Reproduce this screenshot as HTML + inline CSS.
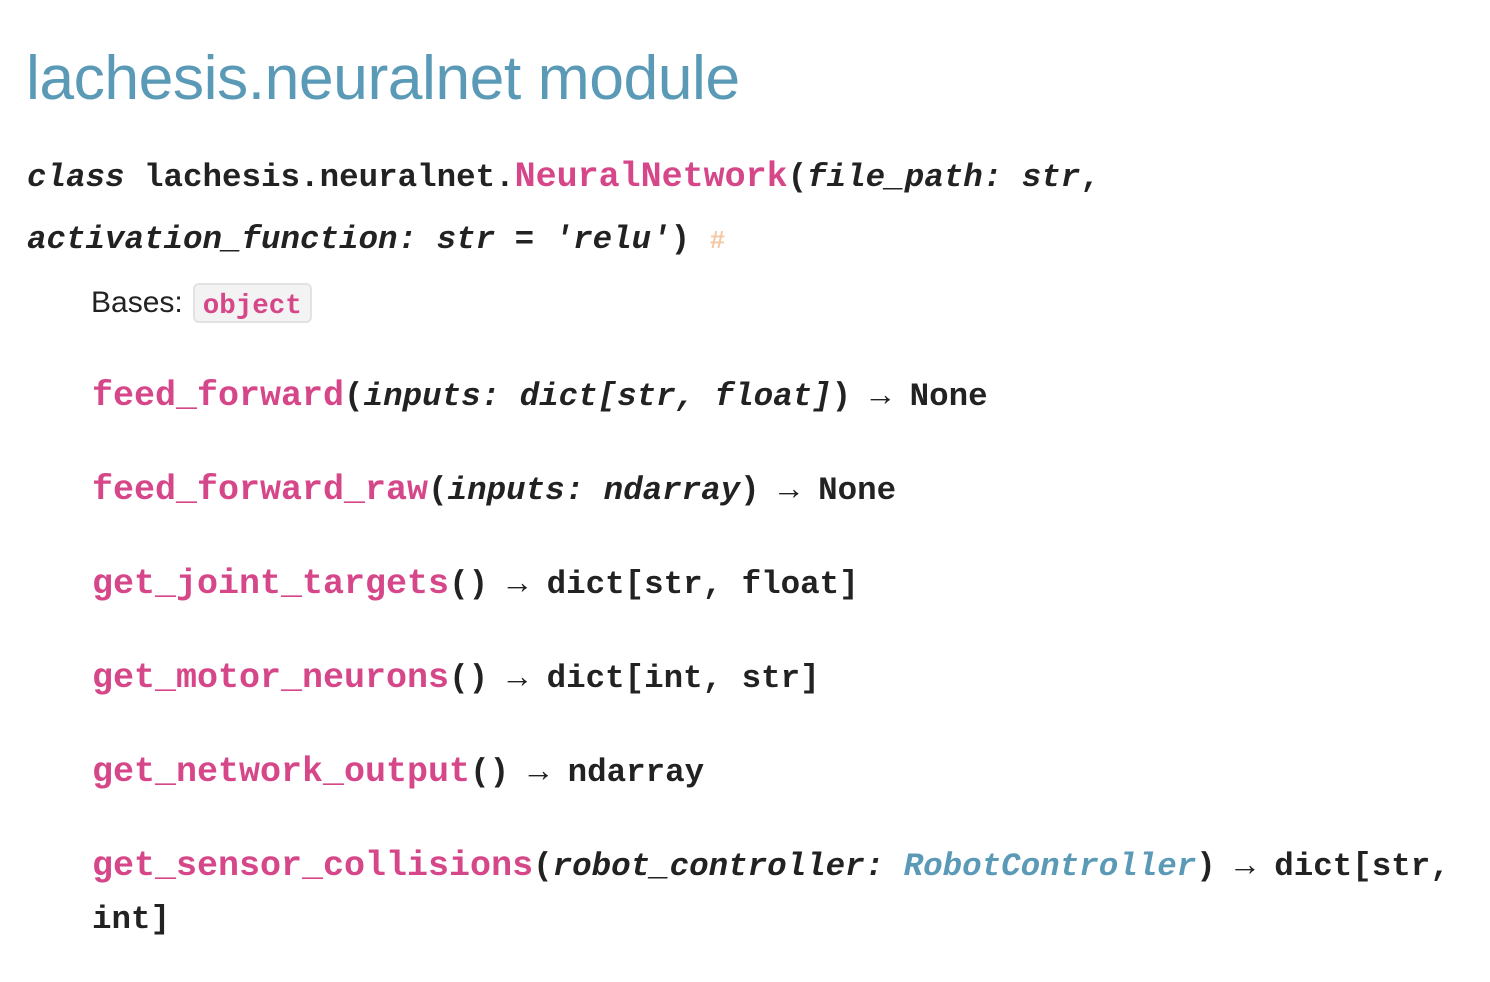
<!DOCTYPE html>
<html><head><meta charset="utf-8"><style>
body{margin:0;background:#fff;width:1490px;height:982px;overflow:hidden;color:#222;}
.h{position:absolute;left:26px;top:38px;font:62.5px "Liberation Sans",sans-serif;color:#5b9ab7;letter-spacing:-0.5px;margin:0;font-weight:normal;line-height:80px}
.l{position:absolute;white-space:nowrap;font:bold 32.5px "Liberation Mono","DejaVu Sans Mono",monospace;color:#222;line-height:40px}
.p{color:#d6478a;font-size:35px}
.i{font-style:italic}
.b{color:#5b9ab7}
.hash{color:#f3c8a4;font-size:26px;font-weight:bold}
.bases{position:absolute;left:91px;top:283px;font:30px "Liberation Sans",sans-serif;color:#222;line-height:40px;display:flex;align-items:center}
.obj{display:inline-block;margin-left:10px;background:#f3f3f3;border:2px solid #e2e2e2;border-radius:6px;padding:0 8px;height:36px;font:bold 27.5px "Liberation Mono",monospace;color:#d6478a;position:relative}
.obj span{position:relative;top:6px;line-height:30px;display:inline-block}
</style></head><body>
<h1 class="h">lachesis.neuralnet module</h1>
<div class="l" style="left:27px;top:157px"><span class="i">class</span> lachesis.neuralnet.<span class="p">NeuralNetwork</span>(<span class="i">file_path: str</span>,</div>
<div class="l" style="left:27px;top:220px"><span class="i">activation_function: str</span> = <span class="i">'relu'</span>) <span class="hash">#</span></div>
<div class="bases">Bases: <span class="obj"><span>object</span></span></div>
<div class="l" style="left:92px;top:376px"><span class="p">feed_forward</span>(<span class="i">inputs: dict[str, float]</span>) → None</div>
<div class="l" style="left:92px;top:470px"><span class="p">feed_forward_raw</span>(<span class="i">inputs: ndarray</span>) → None</div>
<div class="l" style="left:92px;top:564px"><span class="p">get_joint_targets</span>() → dict[str, float]</div>
<div class="l" style="left:92px;top:658px"><span class="p">get_motor_neurons</span>() → dict[int, str]</div>
<div class="l" style="left:92px;top:752px"><span class="p">get_network_output</span>() → ndarray</div>
<div class="l" style="left:92px;top:846px"><span class="p">get_sensor_collisions</span>(<span class="i">robot_controller: <span class="b">RobotController</span></span>) → dict[str,</div>
<div class="l" style="left:92px;top:900px">int]</div>
</body></html>
